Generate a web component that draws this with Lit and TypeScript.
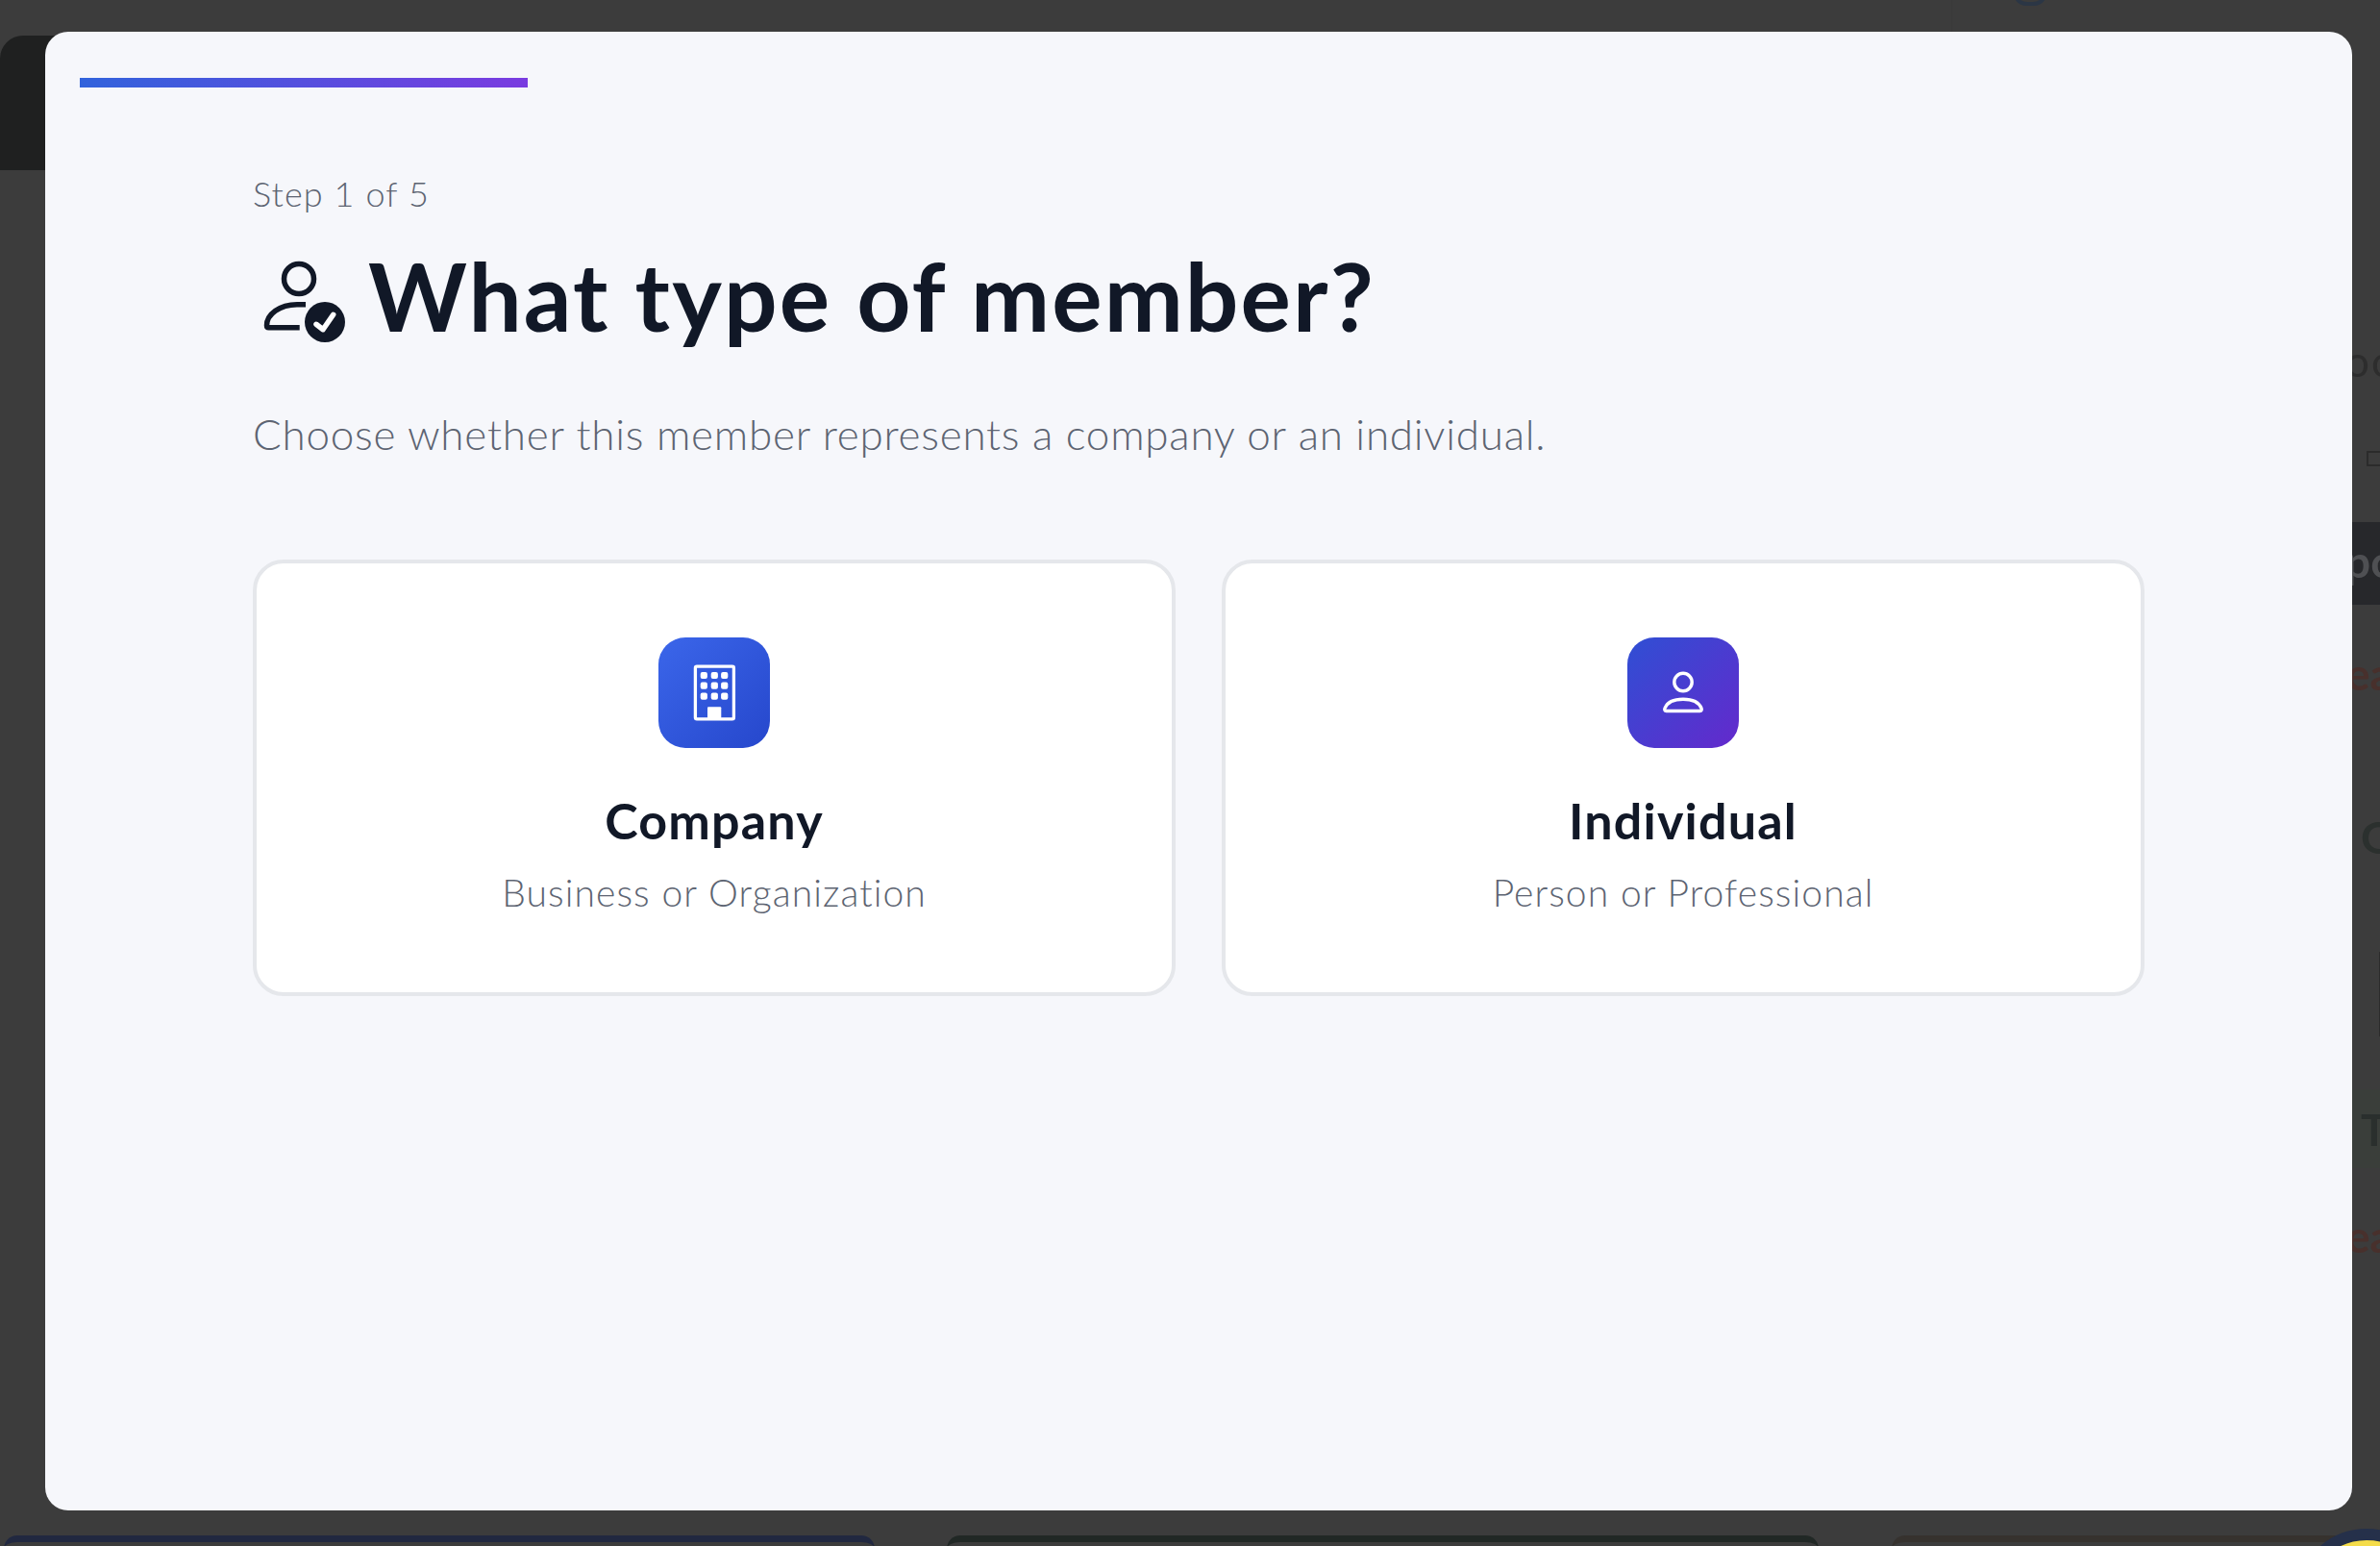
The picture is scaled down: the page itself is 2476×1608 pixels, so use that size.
import { LitElement, html, css } from "lit";
import { customElement } from "lit/decorators.js";

// page behind the dim overlay, only the edges of it show round the modal
@customElement("page-backdrop")
export class PageBackdrop extends LitElement {
  static styles = css`
    :host {
      position: absolute;
      inset: 0;
      display: block;
      overflow: hidden;
      background: #3c3c3c;
      font-family: "Lato", sans-serif;
    }
    .top-divider {
      position: absolute;
      left: 2030px;
      top: 0;
      width: 1px;
      height: 33px;
      background: #393939;
    }
    .top-icon {
      position: absolute;
      left: 2092px;
      top: -14px;
      width: 40px;
      height: 20px;
      color: #2b3645;
    }
    .header-card {
      position: absolute;
      left: 0;
      top: 37px;
      width: 120px;
      height: 140px;
      background: #1f2020;
      border-radius: 24px 0 0 0;
    }
    .strip {
      position: absolute;
      left: 2447px;
      right: 0;
      top: 340px;
      display: flex;
      flex-direction: column;
      overflow: hidden;
    }
    .row {
      display: flex;
      align-items: center;
      white-space: nowrap;
      overflow: hidden;
      filter: blur(0.6px);
    }
    .oo { height: 70px; font-size: 44px; color: #2d2d2d; margin-left: -7px; letter-spacing: 2px; }
    .box-row { height: 133px; padding-left: 15px; box-sizing: border-box; }
    .box { width: 30px; height: 12px; border: 2px solid #2b2b2b; flex: none; }
    .po { height: 86px; background: #27282b; color: #4f5053; font-size: 46px; font-weight: 700; padding-bottom: 6px; box-sizing: border-box; text-indent: -7px; }
    .ea { height: 140px; color: #48302c; font-size: 46px; font-weight: 700; text-indent: -6px; }
    .ea-first { height: 142px; }
    .gee { height: 198px; color: #2b302e; font-size: 46px; font-weight: 700; padding-left: 9px; box-sizing: border-box; }
    .rule-row { height: 164px; padding: 0 0 34px 28px; box-sizing: border-box; }
    .rule { width: 2px; height: 88px; background: #2c2c2c; }
    .te { height: 82px; background: #3a3e3a; color: #2a2f2d; font-size: 46px; font-weight: 700; padding-left: 9px; box-sizing: border-box; }
    .bottom {
      position: absolute;
      left: 0;
      top: 1597px;
      right: 0;
      display: flex;
    }
    .tile {
      height: 40px;
      box-sizing: border-box;
      background: #3c3c3c;
      border-top: 7px solid;
      border-radius: 14px 14px 0 0;
      flex: none;
    }
    .tile.navy { margin-left: 4px; width: 906px; border-color: #212840; }
    .tile.green { margin-left: 75px; width: 907px; border-color: #212825; }
    .tile.brown { margin-left: 76px; width: 520px; border-color: #36322e; }
    .help {
      position: absolute;
      left: 2389px;
      top: 1590px;
      width: 146px;
      height: 146px;
      box-sizing: border-box;
      border: 12px solid #25304a;
      border-radius: 50%;
      background: #f5dc4a;
    }
  `;

  render() {
    return html`
      <div class="top-divider"></div>
      <svg class="top-icon" viewBox="0 0 40 20" fill="none" stroke="currentColor" stroke-width="4">
        <path d="M5 10q3 8 12 8h6q9 0 12-8" />
      </svg>
      <div class="header-card"></div>
      <div class="strip">
        <div class="row oo">oo</div>
        <div class="row box-row"><div class="box"></div></div>
        <div class="row po">po</div>
        <div class="row ea ea-first">ea</div>
        <div class="row gee">G</div>
        <div class="row rule-row"><div class="rule"></div></div>
        <div class="row te">Te</div>
        <div class="row ea">ea</div>
      </div>
      <div class="bottom">
        <div class="tile navy"></div>
        <div class="tile green"></div>
        <div class="tile brown"></div>
      </div>
      <div class="help"></div>
    `;
  }
}

const buildingIcon = html`
  <svg class="glyph" viewBox="0 0 64 64" fill="none">
    <rect x="12.4" y="4.2" width="40" height="54.6" rx="1.6" stroke="#fff" stroke-width="3.3" />
    <g fill="#fff">
      <rect x="17.7" y="9.9" width="7.2" height="7.2" rx="2" />
      <rect x="28.7" y="9.9" width="7.2" height="7.2" rx="2" />
      <rect x="39.1" y="9.9" width="7.2" height="7.2" rx="2" />
      <rect x="17.7" y="20.6" width="7.2" height="7.2" rx="2" />
      <rect x="28.7" y="20.6" width="7.2" height="7.2" rx="2" />
      <rect x="39.1" y="20.6" width="7.2" height="7.2" rx="2" />
      <rect x="17.7" y="31.6" width="7.2" height="7.2" rx="2" />
      <rect x="28.7" y="31.6" width="7.2" height="7.2" rx="2" />
      <rect x="39.1" y="31.6" width="7.2" height="7.2" rx="2" />
      <rect x="25" y="46.2" width="14.3" height="12" rx="1" />
    </g>
  </svg>
`;

const personIcon = html`
  <svg class="glyph" viewBox="0 0 64 64" fill="none" stroke="#fff" stroke-width="3.4">
    <circle cx="32" cy="20.5" r="9.2" />
    <path d="M14.5 50.5C12.8 50.5 12.4 49 13 47.6C15.5 41.5 22 38.2 32 38.2C42 38.2 48.5 41.5 51 47.6C51.6 49 51.2 50.5 49.5 50.5Z" />
  </svg>
`;

@customElement("member-type-card")
export class MemberTypeCard extends LitElement {
  static properties = {
    heading: { type: String },
    detail: { type: String },
    kind: { type: String },
  };

  declare heading: string;
  declare detail: string;
  declare kind: string;

  static styles = css`
    :host {
      display: block;
    }
    .card {
      box-sizing: border-box;
      height: 454px;
      padding-top: 77px;
      display: flex;
      flex-direction: column;
      align-items: center;
      background: #fff;
      border: 4px solid #e5e7eb;
      border-radius: 32px;
    }
    .tile {
      width: 116px;
      height: 115px;
      border-radius: 28px;
      display: flex;
      align-items: center;
      justify-content: center;
    }
    .tile.company {
      background: linear-gradient(135deg, #3b66ea, #2647cc);
    }
    .tile.individual {
      background: linear-gradient(135deg, #2f4fd4, #6429cc);
    }
    .glyph {
      width: 64px;
      height: 64px;
    }
    h3 {
      margin: 42px 0 0;
      font-size: 52px;
      line-height: 66px;
      letter-spacing: 1.2px;
      font-weight: 700;
      color: #111827;
    }
    p {
      margin: 17px 0 0;
      font-size: 39px;
      line-height: 50px;
      letter-spacing: 1.1px;
      font-weight: 300;
      color: #5d6472;
    }
  `;

  render() {
    return html`
      <div class="card">
        <div class="tile ${this.kind}">${this.kind === "company" ? buildingIcon : personIcon}</div>
        <h3>${this.heading}</h3>
        <p>${this.detail}</p>
      </div>
    `;
  }
}

@customElement("app-root")
export class AppRoot extends LitElement {
  static styles = css`
    :host {
      display: block;
      position: relative;
      width: 2476px;
      height: 1608px;
      overflow: hidden;
      font-family: "Lato", sans-serif;
    }
    .overlay {
      position: absolute;
      inset: 0;
      box-sizing: border-box;
      padding: 33px 29px 37px 47px;
      display: flex;
    }
    .modal {
      flex: 1;
      box-sizing: border-box;
      padding: 48px 36px 0;
      background: #f6f7fb;
      border-radius: 24px;
    }
    .progress {
      height: 10px;
    }
    .progress-fill {
      width: 20%;
      height: 100%;
      background: linear-gradient(90deg, #3163dc, #7a3be0);
    }
    .body {
      padding: 88px 180px 0;
    }
    .step {
      font-size: 36px;
      line-height: 44px;
      letter-spacing: 1.1px;
      font-weight: 300;
      color: #5d6472;
    }
    .title-row {
      display: flex;
      align-items: center;
      gap: 24px;
      margin-top: 24px;
    }
    .title-icon {
      width: 96px;
      height: 96px;
      margin-top: 10px;
      flex: none;
    }
    h1 {
      margin: 0;
      font-size: 98px;
      line-height: 120px;
      letter-spacing: 2.15px;
      font-weight: 700;
      color: #111827;
    }
    .lead {
      margin: 56px 0 0;
      font-size: 44px;
      line-height: 56px;
      letter-spacing: 0.75px;
      font-weight: 300;
      color: #5d6472;
    }
    .cards {
      display: grid;
      grid-template-columns: 1fr 1fr;
      gap: 48px;
      margin-top: 103px;
    }
  `;

  render() {
    return html`
      <page-backdrop></page-backdrop>
      <div class="overlay">
        <div class="modal">
          <div class="progress"><div class="progress-fill"></div></div>
          <div class="body">
            <div class="step">Step 1 of 5</div>
            <div class="title-row">
              <svg class="title-icon" viewBox="0 0 96 96" fill="none">
                <circle cx="48" cy="26" r="15.5" stroke="#111827" stroke-width="5.5" />
                <path d="M55 52.7H46C28 52.7 14.5 63 14.5 74.5Q14.5 76.7 16.5 76.7H48.7" stroke="#111827" stroke-width="5.5" />
                <circle cx="75" cy="71" r="21" fill="#111827" />
                <path d="M66 73.3L73 78.7L83.7 63.3" stroke="#fff" stroke-width="5.5" stroke-linecap="round" stroke-linejoin="round" />
              </svg>
              <h1>What type of member?</h1>
            </div>
            <p class="lead">Choose whether this member represents a company or an individual.</p>
            <div class="cards">
              <member-type-card kind="company" heading="Company" detail="Business or Organization"></member-type-card>
              <member-type-card kind="individual" heading="Individual" detail="Person or Professional"></member-type-card>
            </div>
          </div>
        </div>
      </div>
    `;
  }
}
